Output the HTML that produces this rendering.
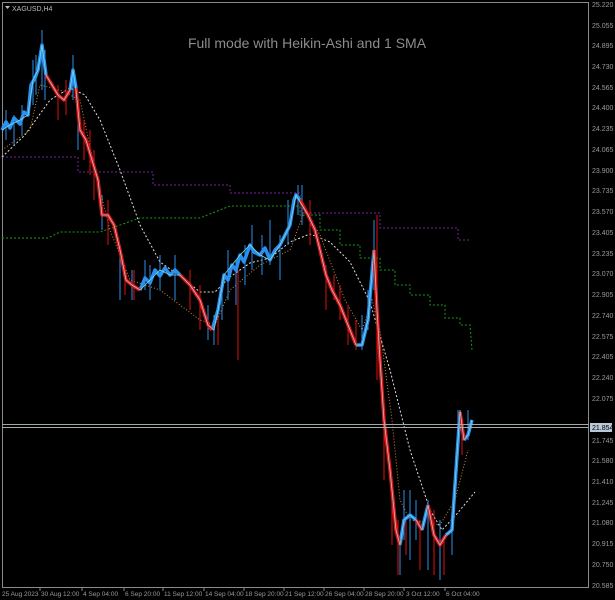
<!DOCTYPE html>
<html><head><style>
body{margin:0;background:#000;width:615px;height:600px;overflow:hidden;font-family:"Liberation Sans",sans-serif}
svg{display:block}
</style></head><body>
<svg width="615" height="600" viewBox="0 0 615 600" xmlns="http://www.w3.org/2000/svg">
<rect width="615" height="600" fill="#000"/>
<rect x="2.5" y="2.5" width="586" height="585" fill="none" stroke="#8a8a8a" stroke-width="1"/>
<text x="307" y="48" fill="#8c8c8c" font-size="14" text-anchor="middle" font-family="Liberation Sans">Full mode with Heikin-Ashi and 1 SMA</text>
<path d="M5 6 l5 0 l-2.5 3z" fill="#bbb"/>
<text x="12" y="11" fill="#bbb" font-size="7" font-family="Liberation Sans">XAGUSD,H4</text>
<path d="M2 157H78V172H153V185H230V193H300V213H380V228H458V240H470" fill="none" stroke="#7a1fa0" stroke-width="1" stroke-dasharray="2,2"/>
<path d="M2 238H48L60 232H100L140 218H200L230 206H300V215H320V230H340V245H360V258H380V270H395V285H410V295H430V305H445V318H460V325H470L472 350" fill="none" stroke="#1a9a1a" stroke-width="1" stroke-dasharray="2,2"/>
<path d="M2 157 L25 135 L50 100 L70 88 L85 95 L100 120 L120 170 L140 225 L160 262 L180 276 L200 292 L215 292 L230 277 L250 263 L270 258 L290 242 L310 234 L330 242 L350 262 L370 302 L390 370 L410 450 L430 510 L442 530 L456 515 L475 492" fill="none" stroke="#ddd" stroke-width="1" stroke-dasharray="2,2"/>
<path d="M2 150 L30 130 L40 85 L60 90 L80 100 L95 170 L110 230 L130 280 L160 290 L200 320 L215 325 L230 290 L260 265 L290 250 L305 210 L320 235 L345 300 L362 330 L372 300 L380 330 L392 420 L400 500 L410 520 L440 525 L455 500 L468 450" fill="none" stroke="#c98a3a" stroke-width="1" stroke-dasharray="1,2"/>
<g stroke-width="1">
<path d="M6 110V140M14 115V145M22 105V135M33 60V105M36 55V95M42 30V90M45 50V100M73 55V100M78 120V150M102 195V230M120 250V300M132 270V300M145 260V290M150 265V300M160 255V290M175 255V300M208 305V340M214 315V345M222 280V320M228 250V300M236 260V305M245 245V285M252 225V270M262 235V275M270 220V265M280 235V280M288 200V245M298 185V215M302 185V225M362 315V350M368 290V330M374 220V290M400 540V575M404 490V540M410 490V560M416 500V540M428 500V570M440 520V580M452 520V555M458 410V460M468 410V440" stroke="#2a8fe8"/>
<path d="M58 85V120M66 80V115M84 120V160M90 130V175M94 150V200M108 200V245M125 265V295M134 270V300M190 270V310M200 285V330M218 310V345M238 270V360M310 200V245M326 265V310M334 275V300M340 285V320M348 305V345M356 320V350M377 215V380M384 400V480M392 480V545M398 520V575M406 520V555M420 520V570M434 510V575M444 540V575M462 420V455" stroke="#e01010"/>
</g>
<g fill="none" stroke="#2a90ee" stroke-width="3.5" stroke-linejoin="round">
<polyline points="2,130 6,122 10,128 14,118 20,124 24,112 28,115 31,85 35,78 38,70 42,45 46,75"/>
<polyline points="70,90 73,70 76,88"/>
<polyline points="140,290 145,278 150,283 155,270 160,276 165,268 170,275 175,270 180,275"/>
<polyline points="212,330 218,310 224,275 228,280 232,265 236,270 240,255 244,262 250,245 254,252 260,255 265,248 270,260 275,250 280,245 285,235 290,225 294,200 296,195 300,200"/>
<polyline points="356,345 362,345 368,320 374,250"/>
<polyline points="400,545 404,520 410,515 416,520"/>
<polyline points="422,530 428,505"/>
<polyline points="446,535 452,530 456,470 460,412"/>
<polyline points="464,440 468,435 472,420"/>
</g>
<g fill="none" stroke="#f01010" stroke-width="3.5" stroke-linejoin="round">
<polyline points="46,75 52,85 58,95 64,100 70,90"/>
<polyline points="76,88 80,130 86,140 92,160 98,180 102,215 108,215 114,225 120,250 126,280 132,285 140,290"/>
<polyline points="180,275 190,285 200,300 208,325 212,330"/>
<polyline points="300,200 308,215 315,230 320,250 326,275 332,290 340,305 348,325 356,345"/>
<polyline points="374,250 377,310 380,360 384,420 390,470 396,530 400,545"/>
<polyline points="416,520 422,530"/>
<polyline points="428,505 434,535 440,545 446,535"/>
<polyline points="460,412 464,440"/>
</g>
<polyline fill="none" stroke="#7fd8e0" stroke-width="0.8" points="2,130 10,125 20,120 28,115 33,80 38,70 42,45 46,75 52,85 58,95 64,100 70,90 73,70 76,90 80,130 86,140 92,160 98,180 102,215 108,215 114,225 120,250 126,280 132,285 140,290 150,280 160,270 170,275 180,275 190,285 200,300 208,325 214,330 218,310 224,275 232,265 240,255 250,245 260,255 270,260 280,245 290,225 296,195 302,205 308,215 315,230 320,250 326,275 332,290 340,305 348,325 356,345 362,345 368,320 374,250 377,310 380,360 384,420 390,470 396,530 400,545 404,520 410,515 416,520 422,530 428,505 434,535 440,545 446,535 452,530 456,470 460,410 464,440 468,435 472,420"/>
<line x1="2" y1="424.5" x2="589" y2="424.5" stroke="#9aa" stroke-width="1"/>
<line x1="2" y1="427.5" x2="589" y2="427.5" stroke="#aaa" stroke-width="1"/>
<rect x="590" y="423" width="22" height="9" fill="#b8c8d8"/>
<text x="592" y="430" fill="#000" font-size="7">21.854</text>
<g fill="#9a9a9a" font-size="7" font-family="Liberation Sans">
<text x="592" y="7">25.220</text><text x="592" y="28">25.055</text><text x="592" y="48">24.895</text><text x="592" y="69">24.730</text><text x="592" y="90">24.565</text><text x="592" y="110">24.400</text><text x="592" y="131">24.235</text><text x="592" y="152">24.065</text><text x="592" y="173">23.900</text><text x="592" y="193">23.735</text><text x="592" y="214">23.570</text><text x="592" y="235">23.405</text><text x="592" y="256">23.235</text><text x="592" y="276">23.070</text><text x="592" y="297">22.905</text><text x="592" y="318">22.740</text><text x="592" y="339">22.575</text><text x="592" y="359">22.405</text><text x="592" y="380">22.240</text><text x="592" y="401">22.075</text><text x="592" y="443">21.745</text><text x="592" y="463">21.580</text><text x="592" y="484">21.410</text><text x="592" y="505">21.245</text><text x="592" y="525">21.080</text><text x="592" y="546">20.915</text><text x="592" y="567">20.750</text><text x="592" y="588">20.585</text>
</g>
<g stroke="#8a8a8a" stroke-width="1">
<path d="M40 588v3M82 588v3M124 588v3M163 588v3M204 588v3M244 588v3M284 588v3M324 588v3M364 588v3M404 588v3M445 588v3"/>
</g>
<g fill="#9a9a9a" font-size="6.5" font-family="Liberation Sans">
<text x="2" y="596">25 Aug 2023</text><text x="41" y="596">30 Aug 12:00</text><text x="83" y="596">4 Sep 04:00</text><text x="125" y="596">6 Sep 20:00</text><text x="164" y="596">11 Sep 12:00</text><text x="205" y="596">14 Sep 04:00</text><text x="245" y="596">18 Sep 20:00</text><text x="285" y="596">21 Sep 12:00</text><text x="325" y="596">26 Sep 04:00</text><text x="365" y="596">28 Sep 20:00</text><text x="406" y="596">3 Oct 12:00</text><text x="446" y="596">6 Oct 04:00</text>
</g>
</svg>
</body></html>
